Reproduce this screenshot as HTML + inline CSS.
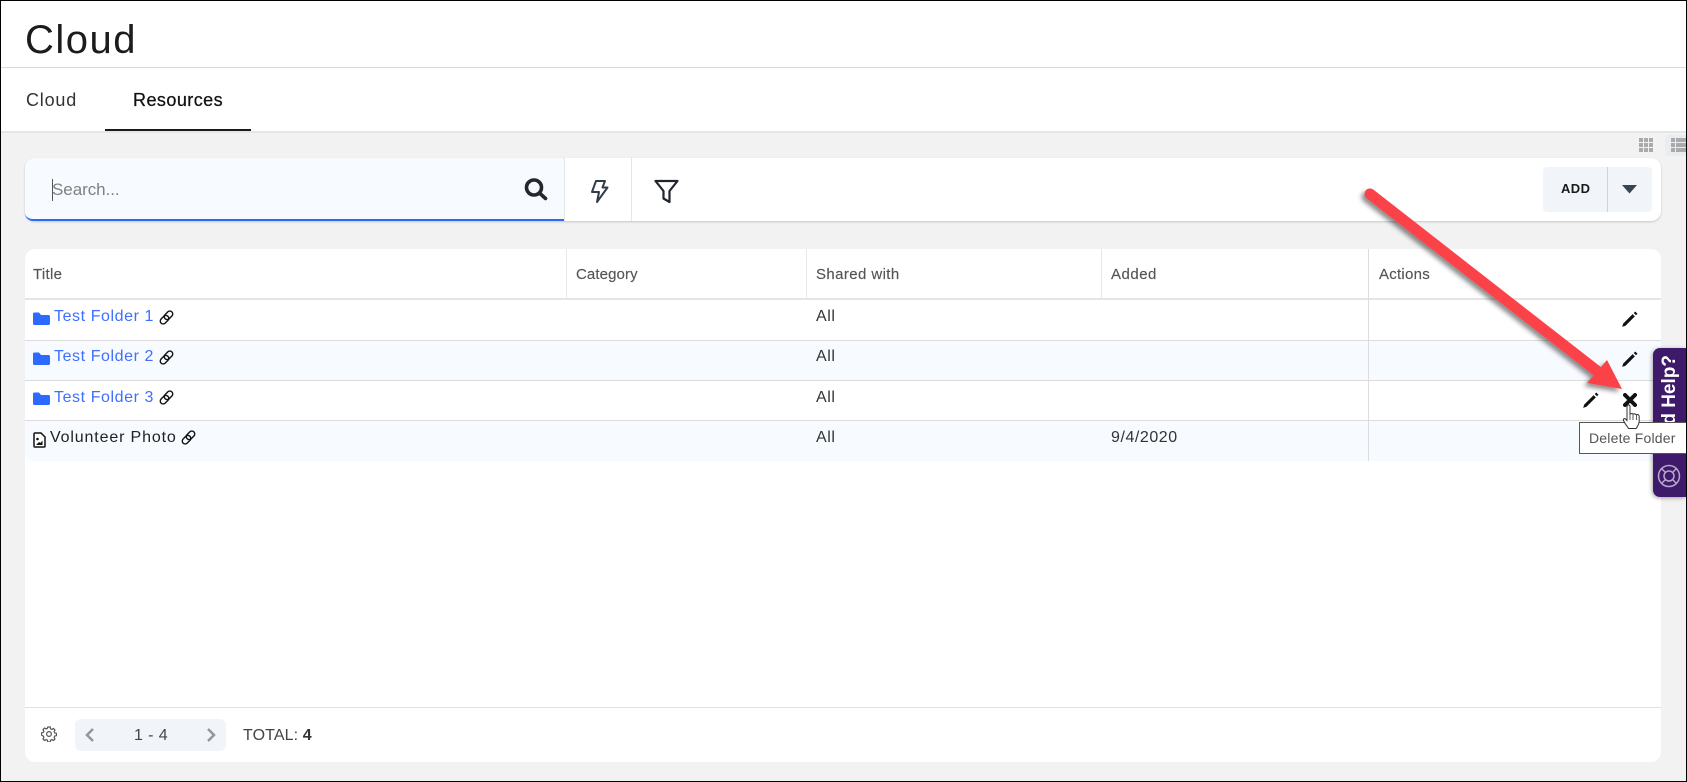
<!DOCTYPE html>
<html><head><meta charset="utf-8"><style>
html,body{margin:0;padding:0}
body{width:1687px;height:782px;position:relative;overflow:hidden;background:#f2f2f2;font-family:"Liberation Sans",sans-serif;color:#222}
.a{position:absolute}
.t{position:absolute;white-space:nowrap;line-height:20px}
.h{font-size:15px;color:#555;-webkit-text-stroke:.15px #555}
.r{font-size:16px;letter-spacing:.55px;color:#333}
.l{font-size:16px;letter-spacing:.58px;color:#3f6fff}
</style></head><body>
<div class="a" style="left:0;top:0;width:1687px;height:131px;background:#fff"></div>
<div class="a" style="left:0;top:67px;width:1687px;height:1px;background:#d8d8d8"></div>
<div class="a" style="left:0;top:131px;width:1687px;height:2px;background:#e6e6e6"></div>
<div class="t" style="left:25px;top:17px;font-size:40px;line-height:46px;letter-spacing:1.500px;color:#1c1c1c">Cloud</div>
<div class="t" style="left:26px;top:90px;font-size:18px;letter-spacing:.8px;color:#333">Cloud</div>
<div class="t" style="left:133px;top:90px;font-size:18px;letter-spacing:.45px;color:#111;-webkit-text-stroke:.25px #111">Resources</div>
<div class="a" style="left:105px;top:129px;width:146px;height:2px;background:#1a1a1a"></div>

<svg class="a" style="left:1639px;top:138px" width="14" height="14"><g fill="#aaa"><rect width="4" height="4"/><rect x="5" width="4" height="4"/><rect x="10" width="4" height="4"/><rect y="5" width="4" height="4"/><rect x="5" y="5" width="4" height="4"/><rect x="10" y="5" width="4" height="4"/><rect y="10" width="4" height="4"/><rect x="5" y="10" width="4" height="4"/><rect x="10" y="10" width="4" height="4"/></g></svg>
<div class="a" style="left:1665px;top:135px;width:21px;height:21px;background:#e9edf2;border-radius:4px 0 0 4px"></div>
<svg class="a" style="left:1671px;top:138px" width="15" height="14"><g fill="#aaa"><rect width="4" height="4"/><rect x="5" width="10" height="4"/><rect y="5" width="4" height="4"/><rect x="5" y="5" width="10" height="4"/><rect y="10" width="4" height="4"/><rect x="5" y="10" width="10" height="4"/></g></svg>

<!-- search card -->
<div class="a" style="left:25px;top:158px;width:1636px;height:63px;background:#fff;border-radius:10px;box-shadow:0 1px 2px rgba(0,0,0,.18)"></div>
<div class="a" style="left:25px;top:158px;width:539px;height:61px;background:#f7faff;border-bottom:2px solid #2b6bf0;border-radius:10px 0 0 8px"></div>
<div class="a" style="left:564px;top:158px;width:1px;height:63px;background:#e6e6e6"></div>
<div class="a" style="left:631px;top:158px;width:1px;height:63px;background:#e6e6e6"></div>
<div class="a" style="left:52px;top:179px;width:1px;height:22px;background:#555"></div>
<div class="t" style="left:52px;top:180px;font-size:17px;letter-spacing:-.05px;color:#808080">Search...</div>
<svg class="a" style="left:524px;top:178px" width="24" height="23" viewBox="0 0 24 23"><circle cx="10" cy="9.500" r="7.500" fill="none" stroke="#23272e" stroke-width="3.600"/><path d="M15.500 15l6 5.500" stroke="#23272e" stroke-width="3.600" stroke-linecap="round"/></svg>
<svg class="a" style="left:590px;top:179px" width="19" height="25" viewBox="0 0 19 25"><path d="M6 2h9l-2.500 6.500h5L7 23l2-10H2z" fill="none" stroke="#333c4a" stroke-width="2" stroke-linejoin="round"/></svg>
<svg class="a" style="left:654px;top:179px" width="25" height="25" viewBox="0 0 25 25"><path d="M1.500 2h22l-8 10v11l-6-3.500V12z" fill="none" stroke="#20242b" stroke-width="2.200" stroke-linejoin="round"/></svg>
<div class="a" style="left:1543px;top:167px;width:109px;height:45px;background:#f1f5f9;border-radius:4px"></div>
<div class="a" style="left:1607px;top:167px;width:1px;height:45px;background:#cfd3d8"></div>
<div class="t" style="left:1561px;top:179px;font-size:13px;font-weight:bold;letter-spacing:.4px;color:#1a1a1a">ADD</div>
<svg class="a" style="left:1622px;top:184px" width="15" height="10"><path d="M0 1h15L7.500 9.500z" fill="#3a4350"/></svg>

<!-- table -->
<div class="a" style="left:25px;top:249px;width:1636px;height:513px;background:#fff;border-radius:10px"></div>
<div class="a" style="left:25px;top:298px;width:1636px;height:2px;background:#e4e4e4"></div>
<div class="a" style="left:25px;top:341px;width:1636px;height:39px;background:#f7faff"></div>
<div class="a" style="left:25px;top:421px;width:1636px;height:40px;background:#f7faff;border-radius:0 0 0 10px"></div>
<div class="a" style="left:25px;top:340px;width:1636px;height:1px;background:#dcdcdc"></div>
<div class="a" style="left:25px;top:380px;width:1636px;height:1px;background:#dcdcdc"></div>
<div class="a" style="left:25px;top:420px;width:1636px;height:1px;background:#dcdcdc"></div>
<div class="a" style="left:566px;top:249px;width:1px;height:50px;background:#e8e8e8"></div>
<div class="a" style="left:806px;top:249px;width:1px;height:50px;background:#e8e8e8"></div>
<div class="a" style="left:1101px;top:249px;width:1px;height:50px;background:#e8e8e8"></div>
<div class="a" style="left:1368px;top:249px;width:1px;height:212px;background:#dcdcdc"></div>
<div class="t h" style="left:33px;top:265px;letter-spacing:.3px">Title</div>
<div class="t h" style="left:576px;top:265px;letter-spacing:.1px">Category</div>
<div class="t h" style="left:816px;top:265px;letter-spacing:.4px">Shared with</div>
<div class="t h" style="left:1111px;top:265px;letter-spacing:.5px">Added</div>
<div class="t h" style="left:1379px;top:265px;letter-spacing:.25px">Actions</div>

<svg class="a" style="left:33px;top:312px" width="17" height="13"><path d="M0 2a1.500 1.500 0 0 1 1.500-1.500H6L8 3h7.500A1.500 1.500 0 0 1 17 4.500V11.500A1.500 1.500 0 0 1 15.500 13H1.500A1.500 1.500 0 0 1 0 11.500z" fill="#2b6bff"/></svg>
<svg class="a" style="left:33px;top:352px" width="17" height="13"><path d="M0 2a1.500 1.500 0 0 1 1.500-1.500H6L8 3h7.500A1.500 1.500 0 0 1 17 4.500V11.500A1.500 1.500 0 0 1 15.500 13H1.500A1.500 1.500 0 0 1 0 11.500z" fill="#2b6bff"/></svg>
<svg class="a" style="left:33px;top:392px" width="17" height="13"><path d="M0 2a1.500 1.500 0 0 1 1.500-1.500H6L8 3h7.500A1.500 1.500 0 0 1 17 4.500V11.500A1.500 1.500 0 0 1 15.500 13H1.500A1.500 1.500 0 0 1 0 11.500z" fill="#2b6bff"/></svg>
<div class="t l" style="left:54px;top:307px">Test Folder 1</div>
<div class="t l" style="left:54px;top:347px">Test Folder 2</div>
<div class="t l" style="left:54px;top:388px">Test Folder 3</div>
<svg class="a" style="left:33px;top:432px" width="13" height="16" viewBox="0 0 13 16"><path d="M1 2a1 1 0 0 1 1-1h6l4 4v9a1 1 0 0 1-1 1H2a1 1 0 0 1-1-1z" fill="#fff" stroke="#111" stroke-width="1.500"/><circle cx="4.500" cy="7" r="1.300" fill="#111"/><path d="M3 13l3-3 1.500 1L9.500 8.500V13z" fill="#111"/></svg>
<div class="t r" style="left:50px;top:428px;color:#222;letter-spacing:.85px">Volunteer Photo</div>

<svg class="a" style="left:159px;top:310px" width="15" height="15" viewBox="0 0 15 15"><g fill="none" stroke="#111" stroke-width="1.400"><rect x="4.700" y="2.400" width="9.600" height="5.800" rx="2.900" transform="rotate(-45 9.500 5.300)"/><rect x=".7" y="6.800" width="9.600" height="5.800" rx="2.900" transform="rotate(-45 5.500 9.700)"/></g></svg>
<svg class="a" style="left:159px;top:350px" width="15" height="15" viewBox="0 0 15 15"><g fill="none" stroke="#111" stroke-width="1.400"><rect x="4.700" y="2.400" width="9.600" height="5.800" rx="2.900" transform="rotate(-45 9.500 5.300)"/><rect x=".7" y="6.800" width="9.600" height="5.800" rx="2.900" transform="rotate(-45 5.500 9.700)"/></g></svg>
<svg class="a" style="left:159px;top:390px" width="15" height="15" viewBox="0 0 15 15"><g fill="none" stroke="#111" stroke-width="1.400"><rect x="4.700" y="2.400" width="9.600" height="5.800" rx="2.900" transform="rotate(-45 9.500 5.300)"/><rect x=".7" y="6.800" width="9.600" height="5.800" rx="2.900" transform="rotate(-45 5.500 9.700)"/></g></svg>
<svg class="a" style="left:181px;top:430px" width="15" height="15" viewBox="0 0 15 15"><g fill="none" stroke="#111" stroke-width="1.400"><rect x="4.700" y="2.400" width="9.600" height="5.800" rx="2.900" transform="rotate(-45 9.500 5.300)"/><rect x=".7" y="6.800" width="9.600" height="5.800" rx="2.900" transform="rotate(-45 5.500 9.700)"/></g></svg>

<div class="t r" style="left:816px;top:307px">All</div>
<div class="t r" style="left:816px;top:347px">All</div>
<div class="t r" style="left:816px;top:388px">All</div>
<div class="t r" style="left:816px;top:428px">All</div>
<div class="t r" style="left:1111px;top:428px;letter-spacing:.55px">9/4/2020</div>

<!-- footer -->
<div class="a" style="left:25px;top:707px;width:1636px;height:1px;background:#e0e0e0"></div>
<svg class="a" style="left:41px;top:726px" width="16" height="16" viewBox="0 0 16 16"><g fill="none" stroke="#555" stroke-width="1.200"><circle cx="8" cy="8" r="2.400"/><path d="M6.800 1h2.400l.4 1.800 1.300.6 1.600-.9 1.500 1.600-.9 1.500.6 1.300 1.800.5v2.200l-1.800.5-.6 1.300.9 1.500-1.500 1.600-1.600-.9-1.300.6-.4 1.800H6.800l-.4-1.800-1.300-.6-1.600.9-1.500-1.600.9-1.500-.6-1.300L.5 9.100V6.900l1.800-.5.600-1.300-.9-1.500 1.500-1.600 1.600.9 1.300-.6z"/></g></svg>
<div class="a" style="left:75px;top:719px;width:151px;height:32px;background:#f1f5f9;border-radius:6px"></div>
<svg class="a" style="left:84px;top:727px" width="11" height="16"><path d="M9 2L3 8l6 6" fill="none" stroke="#8f98a3" stroke-width="2.500"/></svg>
<svg class="a" style="left:206px;top:727px" width="11" height="16"><path d="M2 2l6 6-6 6" fill="none" stroke="#8f98a3" stroke-width="2.500"/></svg>
<div class="t" style="left:134px;top:726px;font-size:16px;letter-spacing:.4px;color:#444">1 - 4</div>
<div class="t" style="left:243px;top:726px;font-size:16px;letter-spacing:.1px;color:#444">TOTAL: <b style="color:#333">4</b></div>

<!-- help tab -->
<div class="a" style="left:1653px;top:348px;width:33px;height:149px;background:#3f1a6b;border-radius:7px 0 0 7px;box-shadow:-1px 1px 4px rgba(0,0,0,.35);overflow:hidden">
<div class="t" style="left:-38px;top:52px;width:110px;height:20px;transform:rotate(-90deg);transform-origin:center;font-size:19px;font-weight:bold;color:#fff;text-align:right">Need Help?</div>
<div class="a" style="left:0;top:105px;width:33px;height:12px;background:#3f1a6b"></div>
</div>
<svg class="a" style="left:1657px;top:464px" width="24" height="24" viewBox="0 0 24 24"><g fill="none" stroke="#b7a9cb" stroke-width="1.500"><circle cx="12" cy="12" r="10.500"/><circle cx="12" cy="12" r="5"/><path d="M4.600 4.600l3.900 3.900M19.400 4.600l-3.900 3.900M4.600 19.400l3.900-3.900M19.400 19.400l-3.900-3.900"/></g></svg>

<!-- action icons -->
<svg class="a" style="left:1621px;top:310px" width="18" height="18" viewBox="0 0 24 24"><path d="M1.500 22.500l1.500-4.500L15.500 5.500l3 3L6 21zM17 4l2-2 3 3-2 2z" fill="#111"/></svg>
<svg class="a" style="left:1621px;top:350px" width="18" height="18" viewBox="0 0 24 24"><path d="M1.500 22.500l1.500-4.500L15.500 5.500l3 3L6 21zM17 4l2-2 3 3-2 2z" fill="#111"/></svg>
<svg class="a" style="left:1582px;top:391px" width="18" height="18" viewBox="0 0 24 24"><path d="M1.500 22.500l1.500-4.500L15.500 5.500l3 3L6 21zM17 4l2-2 3 3-2 2z" fill="#111"/></svg>
<svg class="a" style="left:1623px;top:393px" width="14" height="14" viewBox="0 0 14 14"><path d="M2 2l10 10M12 2L2 12" stroke="#111" stroke-width="4" stroke-linecap="round"/></svg>

<!-- arrow -->
<svg class="a" style="left:0;top:0" width="1687" height="782"><defs><filter id="s" x="-5%" y="-5%" width="110%" height="110%"><feDropShadow dx="-3" dy="3" stdDeviation="2.500" flood-color="#000" flood-opacity=".45"/></filter></defs><g filter="url(#s)" fill="#fb4349"><path d="M1370 194L1597 371" stroke="#fb4349" stroke-width="11" stroke-linecap="round"/><path d="M1622 389L1607 360L1587 383z"/></g></svg>

<!-- tooltip -->
<div class="a" style="left:1579px;top:422px;width:107px;height:30px;background:#fff;border:1px solid #555;border-right:0;box-sizing:content-box"></div>
<div class="t" style="left:1589px;top:428px;font-size:14px;letter-spacing:.2px;color:#555">Delete Folder</div>

<!-- cursor -->
<svg class="a" style="left:1622px;top:404px" width="19" height="26" viewBox="0 0 19 26"><path d="M5 2.500a1.500 1.500 0 0 1 3 0V10l1.800-.5 1.400.5 1.600-.2 1.300.8 1.600-.1c1 .3 1.500 1 1.500 2.500v4c0 3-1.500 5-3 7.500H6.500C5 22 3 20 1.500 16.500c-.6-1.500.8-2.500 2-1.500L5 16.500z" fill="#fff" stroke="#333" stroke-width="1"/><path d="M8 10v6M11 10v6M14.500 11v5" stroke="#333" stroke-width=".8"/></svg>

<!-- border -->
<div class="a" style="left:0;top:0;width:1685px;height:780px;border:1px solid #000;pointer-events:none"></div>
</body></html>
